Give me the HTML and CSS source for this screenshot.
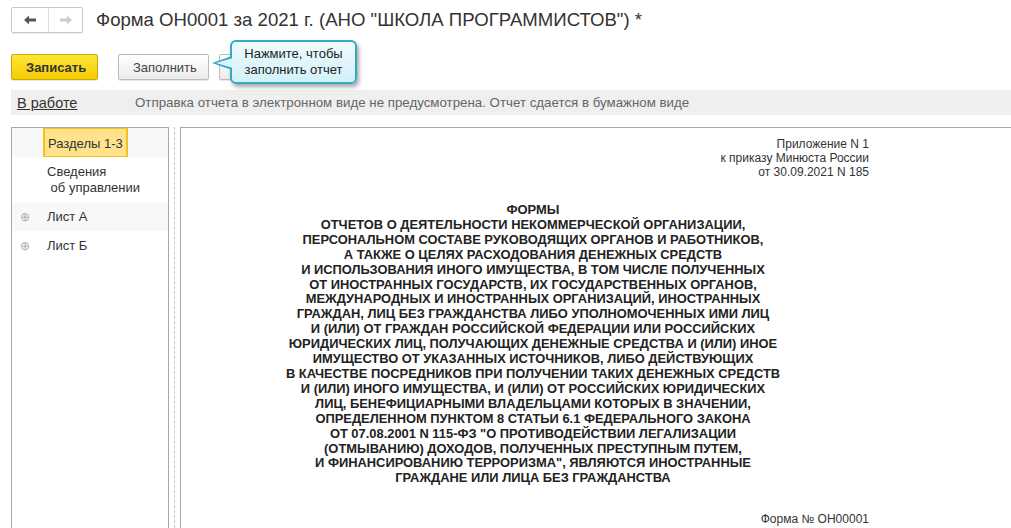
FILE: index.html
```html
<!DOCTYPE html>
<html lang="ru">
<head>
  <meta charset="UTF-8">
  <title>Форма ОН0001</title>
  <link rel="stylesheet" href="styles.css">
</head>
<body>
  <header class="title-bar">
    <div class="nav">
      <button class="nav-btn">
        <svg width="12" height="10" viewBox="0 0 12 10"><path d="M0 5 L5 0.5 L5 3.5 L12 3.5 L12 6.5 L5 6.5 L5 9.5 Z" fill="#555"/></svg>
      </button>
      <button class="nav-btn">
        <svg width="12" height="10" viewBox="0 0 12 10"><path d="M12 5 L7 0.5 L7 3.5 L0 3.5 L0 6.5 L7 6.5 L7 9.5 Z" fill="#ccc"/></svg>
      </button>
    </div>
    <h1>Форма ОН0001 за 2021 г. (АНО "ШКОЛА ПРОГРАММИСТОВ") *</h1>
  </header>

  <div class="toolbar">
    <button class="btn btn-main">Записать</button>
    <button class="btn">Заполнить</button>
    <button class="btn btn-hidden" aria-label="Проверить"></button>
    <div class="tip">Нажмите, чтобы<br>заполнить отчет</div>
  </div>

  <div class="status">
    <a href="#" class="status-link">В работе</a>
    <span class="status-text">Отправка отчета в электронном виде не предусмотрена. Отчет сдается в бумажном виде</span>
  </div>

  <div class="main">
    <ul class="sections">
      <li class="alt"><span class="current">Разделы 1-3</span></li>
      <li class="tall">Сведения<br>&nbsp;об управлении</li>
      <li class="alt"><span class="plus">⊕</span>Лист А</li>
      <li><span class="plus">⊕</span>Лист Б</li>
    </ul>
    <div class="splitter"></div>
    <div class="doc">
      <div class="page">
        <div class="annex">Приложение N 1<br>к приказу Минюста России<br>от 30.09.2021 N 185</div>
        <div class="heading">
          ФОРМЫ<br>
          ОТЧЕТОВ О ДЕЯТЕЛЬНОСТИ НЕКОММЕРЧЕСКОЙ ОРГАНИЗАЦИИ,<br>
          ПЕРСОНАЛЬНОМ СОСТАВЕ РУКОВОДЯЩИХ ОРГАНОВ И РАБОТНИКОВ,<br>
          А ТАКЖЕ О ЦЕЛЯХ РАСХОДОВАНИЯ ДЕНЕЖНЫХ СРЕДСТВ<br>
          И ИСПОЛЬЗОВАНИЯ ИНОГО ИМУЩЕСТВА, В ТОМ ЧИСЛЕ ПОЛУЧЕННЫХ<br>
          ОТ ИНОСТРАННЫХ ГОСУДАРСТВ, ИХ ГОСУДАРСТВЕННЫХ ОРГАНОВ,<br>
          МЕЖДУНАРОДНЫХ И ИНОСТРАННЫХ ОРГАНИЗАЦИЙ, ИНОСТРАННЫХ<br>
          ГРАЖДАН, ЛИЦ БЕЗ ГРАЖДАНСТВА ЛИБО УПОЛНОМОЧЕННЫХ ИМИ ЛИЦ<br>
          И (ИЛИ) ОТ ГРАЖДАН РОССИЙСКОЙ ФЕДЕРАЦИИ ИЛИ РОССИЙСКИХ<br>
          ЮРИДИЧЕСКИХ ЛИЦ, ПОЛУЧАЮЩИХ ДЕНЕЖНЫЕ СРЕДСТВА И (ИЛИ) ИНОЕ<br>
          ИМУЩЕСТВО ОТ УКАЗАННЫХ ИСТОЧНИКОВ, ЛИБО ДЕЙСТВУЮЩИХ<br>
          В КАЧЕСТВЕ ПОСРЕДНИКОВ ПРИ ПОЛУЧЕНИИ ТАКИХ ДЕНЕЖНЫХ СРЕДСТВ<br>
          И (ИЛИ) ИНОГО ИМУЩЕСТВА, И (ИЛИ) ОТ РОССИЙСКИХ ЮРИДИЧЕСКИХ<br>
          ЛИЦ, БЕНЕФИЦИАРНЫМИ ВЛАДЕЛЬЦАМИ КОТОРЫХ В ЗНАЧЕНИИ,<br>
          ОПРЕДЕЛЕННОМ ПУНКТОМ 8 СТАТЬИ 6.1 ФЕДЕРАЛЬНОГО ЗАКОНА<br>
          ОТ 07.08.2001 N 115-ФЗ "О ПРОТИВОДЕЙСТВИИ ЛЕГАЛИЗАЦИИ<br>
          (ОТМЫВАНИЮ) ДОХОДОВ, ПОЛУЧЕННЫХ ПРЕСТУПНЫМ ПУТЕМ,<br>
          И ФИНАНСИРОВАНИЮ ТЕРРОРИЗМА", ЯВЛЯЮТСЯ ИНОСТРАННЫЕ<br>
          ГРАЖДАНЕ ИЛИ ЛИЦА БЕЗ ГРАЖДАНСТВА
        </div>
        <div class="form-no">Форма № ОН00001</div>
      </div>
    </div>
  </div>
</body>
</html>
```

FILE: styles.css
```css
body {
  margin: 0;
  font-family: 'Liberation Sans', Arial, sans-serif;
  color: #333;
  background: #fff;
  height: 528px;
  overflow: hidden;
  display: flex;
  flex-direction: column;
}
.title-bar {
  display: flex;
  align-items: center;
  padding: 8px 0 0 11px;
  height: 24px;
}
.nav {
  display: flex;
  border: 1px solid #c8c8c8;
  border-radius: 2px;
  box-shadow: 0 1px 1px rgba(0,0,0,0.08);
}
.nav-btn {
  width: 36px;
  height: 24px;
  border: none;
  background: #fff;
  display: flex;
  align-items: center;
  justify-content: center;
  padding: 0;
}
.nav-btn + .nav-btn {
  border-left: 1px solid #ddd;
  width: 34px;
}
h1 {
  margin: 0 0 0 13px;
  font-weight: normal;
  font-size: 18.6px;
  color: #333;
}
.toolbar {
  position: relative;
  display: flex;
  gap: 10px;
  padding: 22px 0 0 11px;
  height: 26px;
}
.btn {
  font-family: inherit;
  font-size: 13px;
  color: #444;
  height: 26px;
  padding: 0 14px;
  border: 1px solid #bcbcbc;
  border-radius: 2px;
  background: linear-gradient(#fff, #ececec);
  box-shadow: 0 1px 1px rgba(0,0,0,0.1);
}
.btn-main {
  width: 87px;
  margin-right: 10px;
  font-weight: bold;
  color: #333;
  border-color: #c9a800;
  background: linear-gradient(#ffe53b, #f4cd00);
}
.btn-main + .btn {
  width: 91px;
}
.btn-hidden {
  width: 60px;
}
.tip {
  position: absolute;
  left: 230px;
  top: 43px;
  width: 127px;
  height: 44px;
  margin-top: -35px;
  box-sizing: border-box;
  border: 2px solid #34a9c4;
  border-radius: 6px;
  background: linear-gradient(#eefbff, #d3f1f8);
  box-shadow: 2px 3px 4px rgba(0,0,0,0.35);
  font-size: 13px;
  line-height: 16px;
  color: #222;
  text-align: center;
  padding-top: 4px;
}
.tip::before {
  content: "";
  position: absolute;
  left: -20px;
  top: 14px;
  border-style: solid;
  border-width: 7px 20px 7px 0;
  border-color: transparent #34a9c4 transparent transparent;
}
.tip::after {
  content: "";
  position: absolute;
  left: -16px;
  top: 16px;
  border-style: solid;
  border-width: 5px 17px 5px 0;
  border-color: transparent #dcf4fa transparent transparent;
}
.status {
  margin: 10px 0 0 11px;
  height: 25px;
  background: #efefef;
  display: flex;
  align-items: center;
}
.status-link {
  color: #333;
  margin-left: 6px;
  width: 118px;
  font-size: 14.5px;
}
.status-text {
  color: #666;
  font-size: 13.3px;
}
.main {
  flex: 1;
  display: flex;
  margin: 12px 0 0 11px;
  min-height: 0;
}
.sections {
  list-style: none;
  margin: 0;
  padding: 0;
  width: 156px;
  border: 1px solid #a8a8a8;
  border-bottom: none;
  font-size: 13px;
  color: #333;
}
.sections li {
  height: 29px;
  display: flex;
  align-items: center;
  padding-left: 35px;
  position: relative;
}
.sections li.alt {
  background: #f8f8f8;
}
.sections li.tall {
  height: 45px;
  line-height: 16px;
}
.current {
  margin-left: -4px;
  padding: 0 3px;
  height: 29px;
  line-height: 29px;
  box-sizing: border-box;
  background: #fee38c;
  border: 1px solid #f5c21a;
  border-width: 1px 2px;
}
.plus {
  position: absolute;
  left: 8px;
  color: #aaa;
  font-size: 12px;
}
.splitter {
  width: 0;
  margin: 0 5px 0 5px;
  border-left: 1px dashed #c8c8c8;
}
.doc {
  flex: 1;
  border: 1px solid #a8a8a8;
  border-right: none;
  border-bottom: none;
  overflow: hidden;
}
.page {
  width: 672px;
  margin-left: 16px;
  font-size: 12px;
  color: #333;
}
.annex {
  text-align: right;
  line-height: 14px;
  padding-top: 9px;
}
.heading {
  text-align: center;
  font-weight: bold;
  font-size: 12.9px;
  line-height: 14.9px;
  margin-top: 24px;
  color: #222;
}
.form-no {
  text-align: right;
  margin-top: 26px;
}
```
